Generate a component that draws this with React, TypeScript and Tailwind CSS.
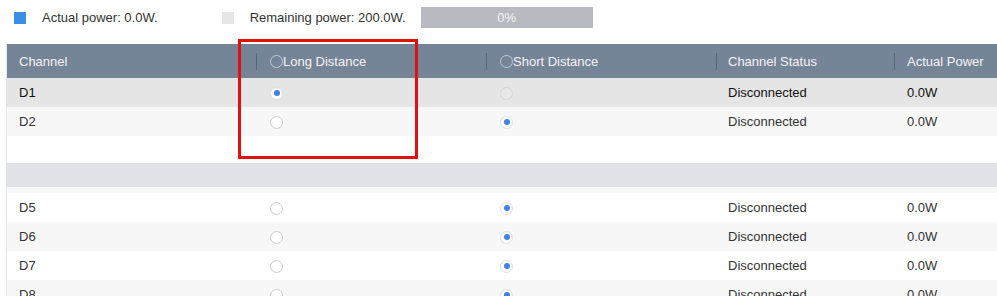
import React from 'react';

type Pick = 'long' | 'short';

interface Row {
  id: string;
  pick: Pick;
  longDisabled?: boolean;
  shortDisabled?: boolean;
  bg: string;
  strong?: boolean;
}

const TOP_ROWS: Row[] = [
  { id: 'D1', pick: 'long', shortDisabled: true, bg: 'bg-[#e5e5e5]', strong: true },
  { id: 'D2', pick: 'short', bg: 'bg-[#f7f7f7]' },
];

const BOTTOM_ROWS: Row[] = [
  { id: 'D5', pick: 'short', bg: 'bg-white' },
  { id: 'D6', pick: 'short', bg: 'bg-[#f7f7f7]' },
  { id: 'D7', pick: 'short', bg: 'bg-white' },
  { id: 'D8', pick: 'short', bg: 'bg-[#f7f7f7]' },
];

const COLS = 'grid grid-cols-[249px_230px_230px_178px_1fr]';

function Radio({ checked, disabled }: { checked?: boolean; disabled?: boolean }) {
  if (checked) {
    return (
      <span className="flex h-[13px] w-[13px] items-center justify-center rounded-full border border-[#dcdfe6] bg-white">
        <span className="h-[6px] w-[6px] rounded-full bg-[#3f82e4]" />
      </span>
    );
  }
  if (disabled) {
    return <span className="block h-[13px] w-[13px] rounded-full border border-[#d6d6d6] bg-[#e8e8e8]" />;
  }
  return <span className="block h-[13px] w-[13px] rounded-full border border-[#cdcdcd] bg-white" />;
}

function HeaderCell({ label, radio, sep, pl }: { label: string; radio?: boolean; sep?: boolean; pl: string }) {
  return (
    <div className={`flex items-center ${sep ? '' : pl}`}>
      {sep && <span className="h-[17px] w-px bg-[#59667a]" />}
      <div className={`flex items-center ${sep ? pl : ''}`}>
        {radio && <span className="block h-[13px] w-[13px] rounded-full border border-[#c3cad4]" />}
        <span>{label}</span>
      </div>
    </div>
  );
}

function DataRow({ row }: { row: Row }) {
  return (
    <div className={`${COLS} h-[29px] items-center pt-px ${row.bg} ${row.strong ? 'text-[#111]' : 'text-[#333]'}`}>
      <div className="pl-[12px]">{row.id}</div>
      <div className="pl-[14px]">
        <Radio checked={row.pick === 'long'} disabled={row.longDisabled} />
      </div>
      <div className="pl-[14px]">
        <Radio checked={row.pick === 'short'} disabled={row.shortDisabled} />
      </div>
      <div className="pl-[12px]">Disconnected</div>
      <div className="pl-[13px]">0.0W</div>
    </div>
  );
}

export default function App() {
  return (
    <div
      className="relative h-[296px] w-[997px] overflow-hidden bg-white text-[13px]"
      style={{ fontFamily: '"Liberation Sans", Arial, sans-serif' }}
    >
      {/* Power summary */}
      <div className="flex h-[44px] items-start pt-[7px] text-[#333]">
        <div className="flex h-[21px] items-center pl-[14px]">
          <span className="h-[12px] w-[12px] bg-[#3a8ee6]" />
          <span className="ml-[16px]">Actual power: 0.0W.</span>
        </div>
        <div className="ml-[64px] flex h-[21px] items-center">
          <span className="h-[12px] w-[12px] bg-[#e6e6e6]" />
          <span className="ml-[16px]">Remaining power: 200.0W.</span>
        </div>
        <div className="ml-[15px] flex h-[21px] w-[172px] items-center justify-center bg-[#b9b9c1] text-[#f4f4f6]">
          0%
        </div>
      </div>

      {/* Table */}
      <div className="ml-[6px] border-l border-[#e6e6ea]">
        <div className={`${COLS} h-[34px] items-center pt-px bg-[#768497] text-[#f2f4f7]`}>
          <HeaderCell label="Channel" pl="pl-[12px]" />
          <HeaderCell label="Long Distance" radio sep pl="pl-[13px]" />
          <HeaderCell label="Short Distance" radio sep pl="pl-[13px]" />
          <HeaderCell label="Channel Status" sep pl="pl-[11px]" />
          <HeaderCell label="Actual Power" sep pl="pl-[12px]" />
        </div>

        {TOP_ROWS.map((row) => (
          <DataRow key={row.id} row={row} />
        ))}

        <div className="h-[27px] bg-white" />
        <div className="h-[24px] bg-[#e1e1e8]" />
        <div className="h-[6px] bg-[#f8f8fa]" />

        {BOTTOM_ROWS.map((row) => (
          <DataRow key={row.id} row={row} />
        ))}
      </div>

      {/* Highlight annotation */}
      <div className="absolute left-[238px] top-[39px] h-[120px] w-[180px] border-[3px] border-[#e01010]" />
    </div>
  );
}
